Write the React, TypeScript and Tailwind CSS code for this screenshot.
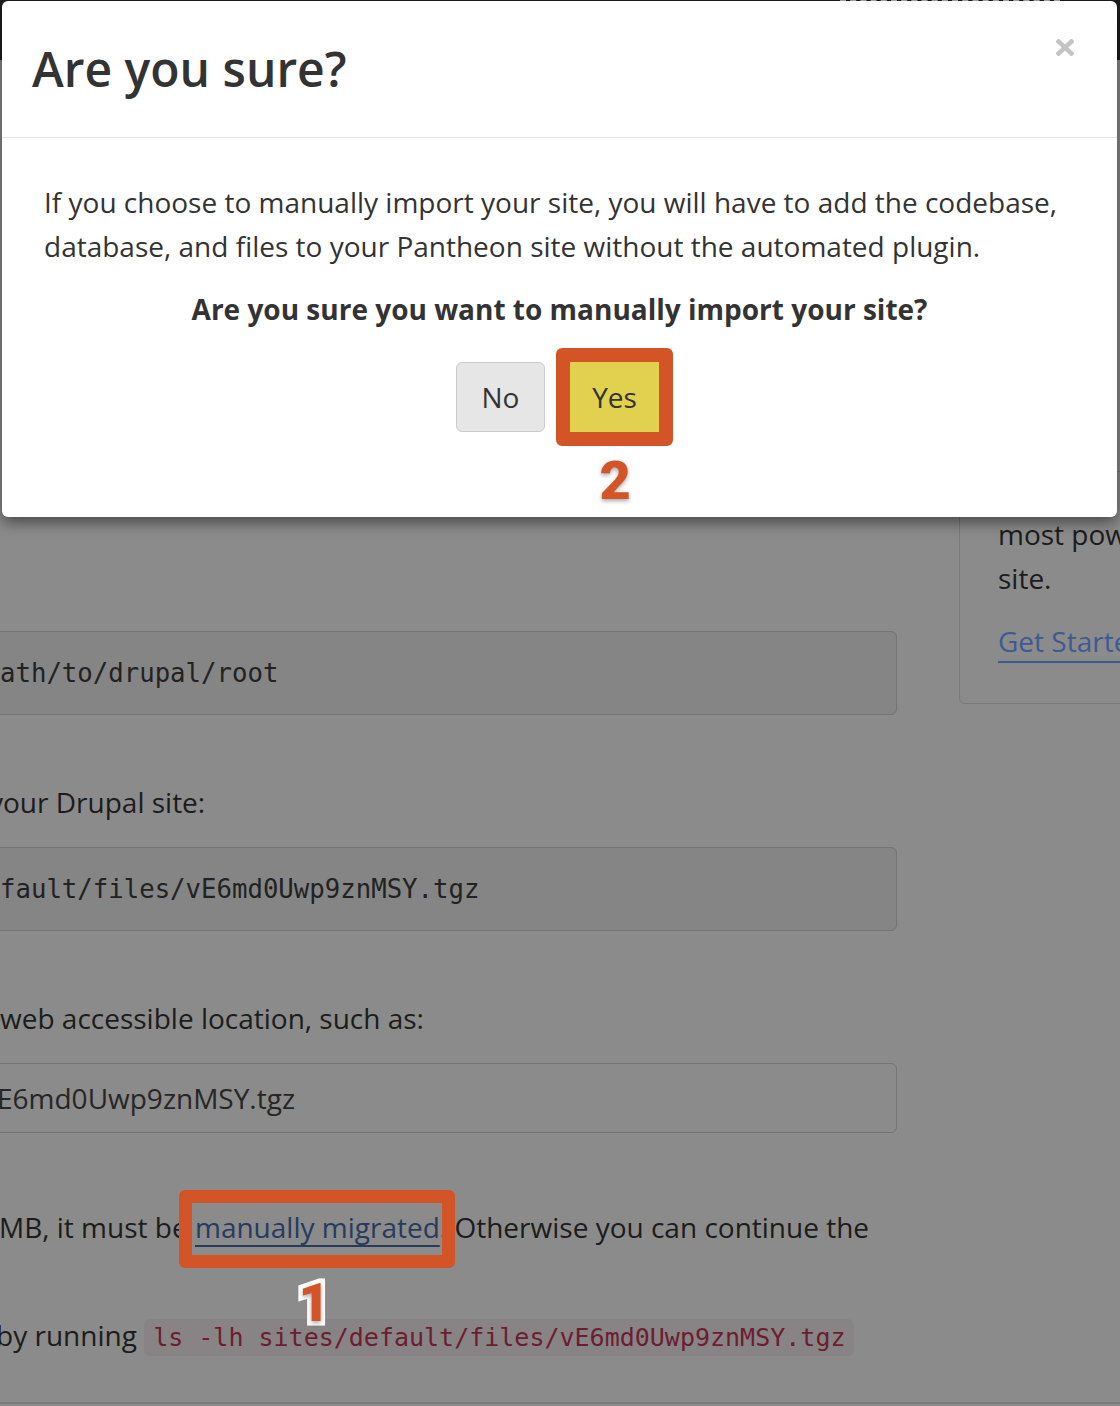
import React from 'react'

const annotation =
  "z-10 font-['Roboto',sans-serif] font-black text-[54px] leading-none text-[#d35426] [paint-order:stroke_fill] [-webkit-text-stroke:9px_white] [text-shadow:0_2px_4px_rgba(0,0,0,0.35)]"

function PageBehind() {
  return (
    <div className="flex flex-col">
      {/* top bar of the page, mostly hidden by the modal */}
      <div className="flex h-[60px] justify-end bg-[#1d1d1d] pr-[60px]">
        <div className="h-0 w-[220px] border-t-2 border-dashed border-[#b5b5b5]" />
      </div>

      <div className="flex">
        {/* main column */}
        <div className="w-[897px] shrink-0 pt-[571px] text-[28px] leading-[44px] text-[#1c1c1c]">
          <div className="-ml-[20px] flex h-[84px] items-center rounded-[6px] border border-[#747474] bg-[#858585] pl-[19px] font-['DejaVu_Sans_Mono',monospace] text-[25.7px] leading-normal text-[#222]">
            ath/to/drupal/root
          </div>

          <p className="mt-[65px] -ml-[11px]">your Drupal site:</p>

          <div className="-ml-[20px] mt-[23px] flex h-[84px] items-center rounded-[6px] border border-[#747474] bg-[#858585] pl-[19px] font-['DejaVu_Sans_Mono',monospace] text-[25.7px] leading-normal text-[#222]">
            fault/files/vE6md0Uwp9znMSY.tgz
          </div>

          <p className="mt-[65px]">web accessible location, such as:</p>

          <div className="-ml-[20px] mt-[23px] flex h-[70px] items-center rounded-[6px] border border-[#747474] pl-[16px] leading-normal text-[#262626]">
            E6md0Uwp9znMSY.tgz
          </div>

          <p className="mt-[72px] -ml-[1px]">
            MB, it must be{' '}
            <a className="relative text-[#263b5e] underline decoration-2 underline-offset-[7px]">
              manually migrated
              <span className="absolute -left-[16px] -right-[15px] -top-[18px] -bottom-[22px] rounded-[6px] border-[13px] border-[#d35426]" />
              <span className={`absolute left-1/2 top-[68px] -ml-[19px] ${annotation}`}>1</span>
            </a>
            . Otherwise you can continue the
          </p>

          <p className="mt-[64px] -ml-[4px]">
            by running{' '}
            <code className="rounded-[6px] bg-[#888486] px-[9px] py-[4px] font-['DejaVu_Sans_Mono',monospace] text-[25px] text-[#6c1d30]">
              ls -lh sites/default/files/vE6md0Uwp9znMSY.tgz
            </code>
          </p>
        </div>

        {/* sidebar card */}
        <div className="ml-[62px] w-[320px] shrink-0 pt-[411px]">
          <div className="rounded-[6px] border border-[#7a7a7a] px-[38px] pt-[40px] pb-[40px] text-[28px] leading-[44px] text-[#1c1c1c]">
            <p>
              most powerful
              <br />
              site.
            </p>
            <p className="mt-[19px]">
              <a className="text-[#3e5a93] underline decoration-2 underline-offset-[9px]">Get Started</a>
            </p>
          </div>
        </div>
      </div>

      <div className="mt-[42px] border-t-2 border-[#7b7b7b]" />
    </div>
  )
}

function ConfirmModal() {
  return (
    <div className="absolute left-[2px] top-[1px] z-20 w-[1115px] rounded-[6px] bg-white text-[#333] shadow-[0_5px_15px_rgba(0,0,0,0.5)]">
      {/* header */}
      <div className="relative h-[137px] border-b border-[#e5e5e5] px-[30px] pt-[44px]">
        <h2 className="text-[48px] font-semibold leading-none">Are you sure?</h2>
        <button className="absolute right-[43px] top-[38px]" aria-label="Close">
          <svg width="18" height="17" viewBox="0 0 18 17">
            <path d="M1 1 L17 16 M17 1 L1 16" stroke="#c4c4c4" strokeWidth="4.5" />
          </svg>
        </button>
      </div>

      {/* body */}
      <div className="px-[42px] pt-[42px] pb-[85px]">
        <p className="text-[28px] leading-[44px]">
          If you choose to manually import your site, you will have to add the codebase, database, and files to your
          Pantheon site without the automated plugin.
        </p>
        <p className="mt-[19px] text-center text-[28px] font-bold leading-[44px]">
          Are you sure you want to manually import your site?
        </p>
        <div className="mt-[31px] flex justify-center gap-[25px] pr-[4px]">
          <button className="h-[70px] w-[89px] rounded-[6px] border border-[#cccccc] bg-[#e6e6e6] text-[28px]">No</button>
          <div className="relative">
            <button className="h-[70px] w-[89px] bg-[#e1d14f] text-[28px]">Yes</button>
            <span className="absolute -inset-[14px] rounded-[6px] border-[14px] border-[#d35426]" />
            <span className={`absolute left-1/2 top-[92px] -ml-[15px] ${annotation}`}>2</span>
          </div>
        </div>
      </div>
    </div>
  )
}

export default function App() {
  return (
    <div className="relative h-[1406px] w-[1120px] overflow-hidden bg-[#8b8b8b] font-['Open_Sans',sans-serif]">
      <PageBehind />
      <ConfirmModal />
    </div>
  )
}
